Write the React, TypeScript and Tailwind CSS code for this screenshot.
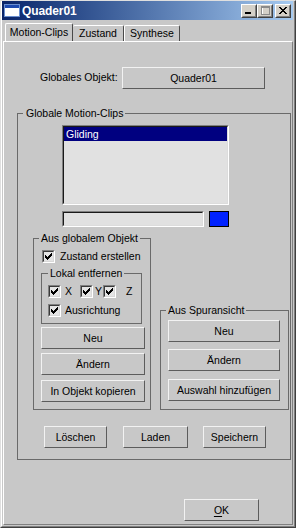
import React from "react";

function Btn({ className, children }: { className: string; children: React.ReactNode }) {
  return (
    <div
      className={`flex items-center justify-center whitespace-nowrap border border-t-[#f2f2f2] border-l-[#f2f2f2] border-r-[#5c5c5c] border-b-[#5c5c5c] leading-none ${className}`}
    >
      {children}
    </div>
  );
}

function Check() {
  const ys = [2, 3, 4, 3, 2, 1, 0];
  return (
    <div className="w-[13px] h-[13px] shrink-0 border border-t-[#808080] border-l-[#808080] border-r-white border-b-white">
      <div className="w-full h-full border border-t-[#3a3a3a] border-l-[#3a3a3a] border-r-[#d8d8d8] border-b-[#d8d8d8] bg-[#e4e4e4] flex items-center justify-center">
        <svg width="7" height="7" viewBox="0 0 7 7" shapeRendering="crispEdges">
          {ys.map((y, x) => (
            <rect key={x} x={x} y={y} width="1" height="3" fill="#000" />
          ))}
        </svg>
      </div>
    </div>
  );
}

function Group({
  label,
  className,
  legendClass,
  children,
}: {
  label: string;
  className: string;
  legendClass: string;
  children: React.ReactNode;
}) {
  return (
    <fieldset className={`border border-[#6a6a6a] min-w-0 ${className}`}>
      <legend className={`leading-[13px] whitespace-nowrap ${legendClass}`}>{label}</legend>
      {children}
    </fieldset>
  );
}

function TitleBtn({ children }: { children: React.ReactNode }) {
  return (
    <div className="w-[16px] h-[14px] border border-t-white border-l-white border-r-[#404040] border-b-[#404040]">
      <div className="w-full h-full border border-t-[#d4d0c8] border-l-[#d4d0c8] border-r-[#808080] border-b-[#808080] bg-[#d4d0c8] flex items-center justify-center">
        {children}
      </div>
    </div>
  );
}

export default function App() {
  return (
    <div className="w-[296px] h-[528px] bg-[#c8c8c8] border border-t-[#dfdfdf] border-l-[#dfdfdf] border-r-[#404040] border-b-[#404040] font-['Liberation_Sans',Arial,sans-serif] text-[10.5px] text-black whitespace-nowrap">
      <div className="w-full h-full border-l border-r border-b border-l-white border-r-[#808080] border-b-[#808080] pr-[1px] pb-[1px] flex flex-col">
        {/* Title bar */}
        <div className="h-[19px] shrink-0 flex items-center bg-linear-to-r from-[#0a246a] to-[#a6caf0] pl-[2px] pr-[2px]">
          <svg width="16" height="13" viewBox="0 0 16 13" shapeRendering="crispEdges">
            <rect x="0.5" y="0.5" width="15" height="12" fill="#ffffff" stroke="#6b8fd0" />
            <rect x="1" y="1" width="14" height="3" fill="#1c49b0" />
          </svg>
          <span className="ml-[2px] text-white font-bold text-[12px] leading-none tracking-[-0.1px]">Quader01</span>
          <div className="flex-1" />
          <TitleBtn>
            <svg width="8" height="7" viewBox="0 0 8 7" shapeRendering="crispEdges">
              <rect x="0" y="5" width="6" height="2" fill="#000" />
            </svg>
          </TitleBtn>
          <TitleBtn>
            <svg width="9" height="9" viewBox="0 0 9 9" shapeRendering="crispEdges">
              <rect x="1.5" y="1.5" width="8" height="8" fill="none" stroke="#ffffff" />
              <rect x="0.5" y="0.5" width="8" height="8" fill="none" stroke="#8a8a8a" />
              <rect x="0" y="1" width="9" height="1" fill="#8a8a8a" />
            </svg>
          </TitleBtn>
          <div className="w-[2px]" />
          <TitleBtn>
            <svg width="8" height="7" viewBox="0 0 8 7" shapeRendering="crispEdges">
              {[0, 1, 2, 3, 4, 5, 6].map((i) => (
                <React.Fragment key={i}>
                  <rect x={i} y={i} width="2" height="1" fill="#000" />
                  <rect x={6 - i} y={i} width="2" height="1" fill="#000" />
                </React.Fragment>
              ))}
            </svg>
          </TitleBtn>
        </div>

        {/* Tabs */}
        <div className="mt-[3px] h-[18px] shrink-0 flex items-end pl-[3px]">
          <div className="w-[68px] h-[18px] flex items-center justify-center border-t border-l border-r border-t-white border-l-white border-r-[#4a4a4a] rounded-t-[2px]">
            Motion-Clips
          </div>
          <div className="w-[51px] h-[16px] flex items-center justify-center border-t border-r border-t-white border-r-[#4a4a4a] rounded-t-[2px]">
            Zustand
          </div>
          <div className="w-[56px] h-[16px] flex items-center justify-center border-t border-l border-r border-t-white border-l-white border-r-[#4a4a4a] rounded-t-[2px]">
            Synthese
          </div>
        </div>

        {/* Panel */}
        <div className="ml-[1px] flex-1 border-t border-l border-r border-b border-t-white border-l-white border-r-[#808080] border-b-[#808080] flex flex-col">
          {/* Globales Objekt */}
          <div className="mt-[25px] ml-[36px] flex items-center">
            <div className="w-[77px] text-right whitespace-nowrap">Globales Objekt:</div>
            <Btn className="ml-[5px] w-[143px] h-[22px]">Quader01</Btn>
          </div>

          {/* Globale Motion-Clips */}
          <Group
            label="Globale Motion-Clips"
            className="mt-[18px] ml-[13px] w-[274px] pb-[11px]"
            legendClass="ml-[5px] pl-[3px] pr-[2px]"
          >
            <div className="mt-[5px] ml-[44px] w-[167px] h-[80px] border border-t-[#808080] border-l-[#808080] border-r-white border-b-white">
              <div className="w-full h-full border border-t-[#1a1a1a] border-l-[#1a1a1a] border-r-[#dcdcdc] border-b-[#dcdcdc] bg-[#e1e1e1]">
                <div className="h-[14px] bg-[#000080] text-white pl-[2px] leading-[14px]">Gliding</div>
              </div>
            </div>
            <div className="mt-[6px] ml-[44px] flex">
              <div className="w-[142px] h-[16px] border border-t-[#808080] border-l-[#808080] border-r-white border-b-white">
                <div className="w-full h-full border border-t-[#1a1a1a] border-l-[#1a1a1a] border-r-[#dcdcdc] border-b-[#dcdcdc] bg-[#e1e1e1]" />
              </div>
              <div className="ml-[5px] w-[20px] h-[16px] border border-black bg-[#0022ff]" />
            </div>

            <div className="mt-[5px] ml-[15px] flex items-end">
              <Group
                label="Aus globalem Objekt"
                className="w-[118px] pb-[7px]"
                legendClass="ml-[5px] pl-[2px] pr-[2px]"
              >
                <div className="mt-[5px] ml-[8px] flex items-center leading-[13px]">
                  <Check />
                  <span className="ml-[5px]">Zustand erstellen</span>
                </div>
                <Group
                  label="Lokal entfernen"
                  className="mt-[4px] ml-[7px] w-[101px] pb-[6px]"
                  legendClass="ml-[6px] pl-[2px] pr-[2px]"
                >
                  <div className="mt-[5px] ml-[6px] flex items-center leading-[13px]">
                    <div className="w-[32px] flex items-center">
                      <Check />
                      <span className="ml-[4px]">X</span>
                    </div>
                    <div className="w-[23px] flex items-center">
                      <Check />
                      <span className="ml-[2px]">Y</span>
                    </div>
                    <div className="flex items-center">
                      <Check />
                      <span className="ml-[10px]">Z</span>
                    </div>
                  </div>
                  <div className="mt-[6px] ml-[6px] flex items-center leading-[13px]">
                    <Check />
                    <span className="ml-[4px]">Ausrichtung</span>
                  </div>
                </Group>
                <Btn className="mt-[3px] ml-[7px] w-[104px] h-[22px]">Neu</Btn>
                <Btn className="mt-[4px] ml-[7px] w-[104px] h-[22px]">Ändern</Btn>
                <Btn className="mt-[5px] ml-[7px] w-[104px] h-[22px]">In Objekt kopieren</Btn>
              </Group>

              <Group
                label="Aus Spuransicht"
                className="ml-[9px] w-[129px] pb-[8px]"
                legendClass="ml-[5px] pl-[2px] pr-[2px]"
              >
                <Btn className="mt-[3px] ml-[7px] w-[112px] h-[22px]">Neu</Btn>
                <Btn className="mt-[7px] ml-[7px] w-[112px] h-[22px]">Ändern</Btn>
                <Btn className="mt-[8px] ml-[7px] w-[112px] h-[22px]">Auswahl hinzufügen</Btn>
              </Group>
            </div>

            <div className="mt-[16px] flex">
              <Btn className="ml-[26px] w-[63px] h-[22px]">Löschen</Btn>
              <Btn className="ml-[16px] w-[65px] h-[22px]">Laden</Btn>
              <Btn className="ml-[15px] w-[63px] h-[22px]">Speichern</Btn>
            </div>
          </Group>

          <Btn className="mt-[39px] ml-[180px] w-[75px] h-[22px]">
            <span>
              <span className="underline underline-offset-2">O</span>K
            </span>
          </Btn>
        </div>
      </div>
    </div>
  );
}
